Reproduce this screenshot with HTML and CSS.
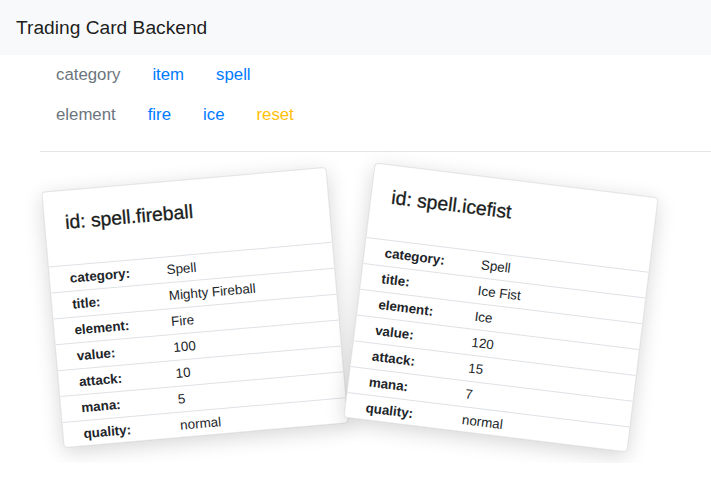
FILE: index.html
```html
<!DOCTYPE html>
<html lang="en">
<head>
<meta charset="utf-8">
<title>Trading Card Backend</title>
<link rel="stylesheet" href="styles.css">
</head>
<body>
<nav class="navbar">
  <span class="brand">Trading Card Backend</span>
</nav>
<main class="content">
  <ul class="filter-row">
    <li><span class="filter-label">category</span></li>
    <li><a class="filter-link" href="#">item</a></li>
    <li><a class="filter-link" href="#">spell</a></li>
  </ul>
  <ul class="filter-row">
    <li><span class="filter-label">element</span></li>
    <li><a class="filter-link" href="#">fire</a></li>
    <li><a class="filter-link" href="#">ice</a></li>
    <li><a class="filter-link reset" href="#">reset</a></li>
  </ul>
  <hr class="divider">
  <div class="cards">
    <div class="card tilt-left">
      <div class="card-body"><h5 class="card-title">id: spell.fireball</h5></div>
      <table class="card-table">
        <tr><th>category:</th><td>Spell</td></tr>
        <tr><th>title:</th><td>Mighty Fireball</td></tr>
        <tr><th>element:</th><td>Fire</td></tr>
        <tr><th>value:</th><td>100</td></tr>
        <tr><th>attack:</th><td>10</td></tr>
        <tr><th>mana:</th><td>5</td></tr>
        <tr><th>quality:</th><td>normal</td></tr>
      </table>
    </div>
    <div class="card tilt-right">
      <div class="card-body"><h5 class="card-title">id: spell.icefist</h5></div>
      <table class="card-table">
        <tr><th>category:</th><td>Spell</td></tr>
        <tr><th>title:</th><td>Ice Fist</td></tr>
        <tr><th>element:</th><td>Ice</td></tr>
        <tr><th>value:</th><td>120</td></tr>
        <tr><th>attack:</th><td>15</td></tr>
        <tr><th>mana:</th><td>7</td></tr>
        <tr><th>quality:</th><td>normal</td></tr>
      </table>
    </div>
  </div>
</main>
</body>
</html>
```

FILE: styles.css
```css
html, body {
  margin: 0;
  padding: 0;
  background: #fff;
  font-family: "Liberation Sans", Arial, sans-serif;
  color: #212529;
}

.navbar {
  height: 55px;
  background: #f8f9fa;
  display: flex;
  align-items: center;
  padding: 0 16px;
}

.brand {
  font-size: 19.2px;
  color: rgba(0, 0, 0, 0.9);
  line-height: 24px;
}

.content {
  padding-left: 40px;
}

.filter-row {
  display: flex;
  list-style: none;
  margin: 0;
  padding: 0;
}

.filter-label,
.filter-link {
  display: block;
  padding: 8px 16px;
  font-size: 16.8px;
  line-height: 24px;
  text-decoration: none;
}

.filter-label {
  color: #6c757d;
}

.filter-link {
  color: #007bff;
}

.filter-link.reset {
  color: #ffc107;
}

.divider {
  margin: 16px 0 0;
  border: 0;
  border-top: 1px solid rgba(0, 0, 0, 0.1);
  height: 0;
}

.cards {
  display: flex;
  gap: 20px;
  padding: 27px 12px;
  align-items: flex-start;
}

.card {
  width: 286px;
  height: 257px;
  box-sizing: border-box;
  background: #fff;
  border: 1px solid rgba(0, 0, 0, 0.1);
  border-radius: 4px;
  box-shadow: 0 5px 20px rgba(0, 0, 0, 0.16);
  overflow: hidden;
}

.tilt-left {
  transform: rotate(-5deg);
}

.tilt-right {
  transform: rotate(7deg);
}

.card-body {
  height: 74px;
  padding: 19px 20px 0;
  box-sizing: border-box;
}

.card-title {
  margin: 0;
  font-size: 19.4px;
  font-weight: normal;
  line-height: 24px;
  color: #1a1d20;
  -webkit-text-stroke: 0.3px #1a1d20;
}

.card-table {
  width: 100%;
  border-collapse: collapse;
  font-size: 13.4px;
}

.card-table th,
.card-table td {
  border-top: 1px solid #dee2e6;
  height: 26px;
  padding: 0;
  box-sizing: border-box;
  text-align: left;
  vertical-align: middle;
}

.card-table th {
  width: 117px;
  padding-left: 20px;
  font-weight: bold;
}
```
